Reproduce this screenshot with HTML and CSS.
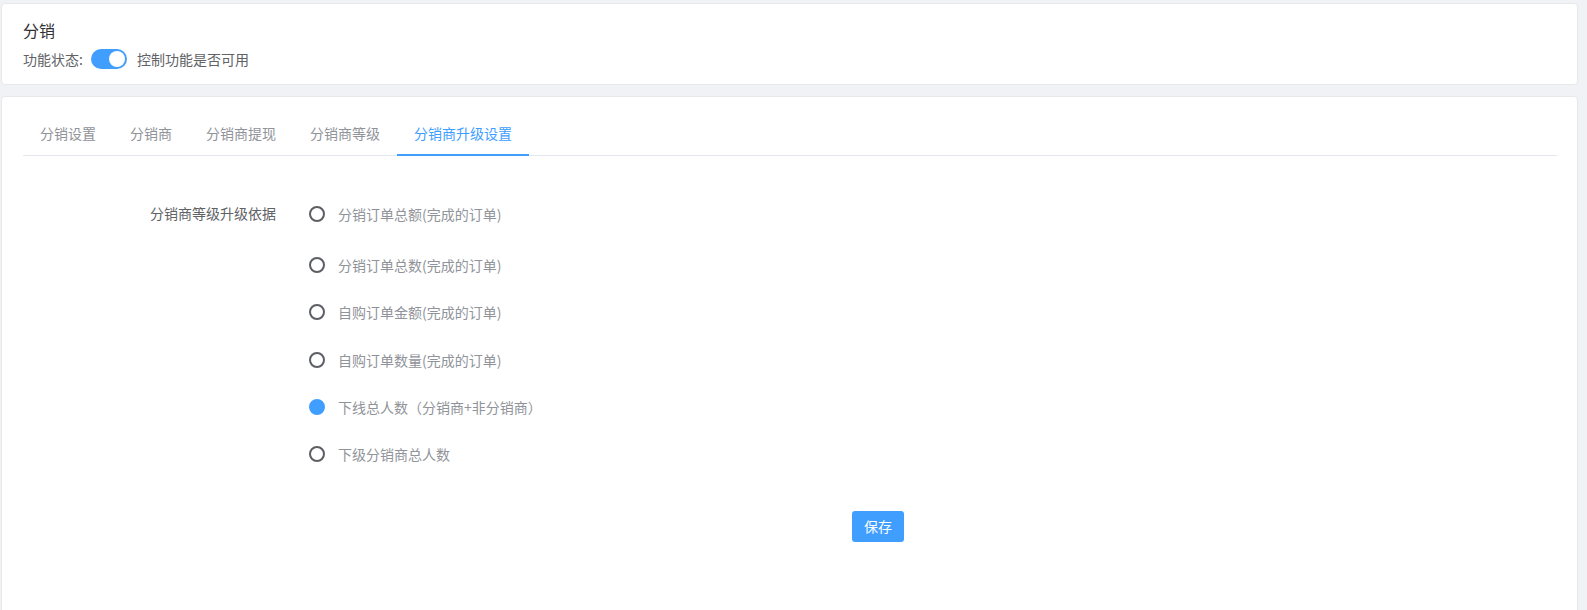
FILE: index.html
```html
<!DOCTYPE html>
<html lang="zh-CN">
  <head>
    <meta charset="UTF-8" />
    <meta name="viewport" content="width=device-width, initial-scale=1.0" />
    <title>分销</title>
    <link rel="stylesheet" href="styles.css">
  </head>
  <body>
    <div class="page">
      <!-- 功能开关 -->
      <section class="card card-head">
        <h2 class="card-title">分销</h2>
        <div class="status-row">
          <span class="status-label">功能状态:</span>
          <span class="switch is-on"><span class="switch-knob"></span></span>
          <span class="status-tip">控制功能是否可用</span>
        </div>
      </section>

      <section class="card card-main">
        <nav class="tabs">
          <a class="tab-item">分销设置</a>
          <a class="tab-item">分销商</a>
          <a class="tab-item">分销商提现</a>
          <a class="tab-item">分销商等级</a>
          <a class="tab-item is-active">分销商升级设置</a>
        </nav>

        <form class="upgrade-form">
          <div class="form-item">
            <label class="form-label">分销商等级升级依据</label>
            <div class="radio-group">
              <label class="radio"><span class="radio-dot"></span><span class="radio-text">分销订单总额(完成的订单)</span></label>
              <label class="radio"><span class="radio-dot"></span><span class="radio-text">分销订单总数(完成的订单)</span></label>
              <label class="radio"><span class="radio-dot"></span><span class="radio-text">自购订单金额(完成的订单)</span></label>
              <label class="radio"><span class="radio-dot"></span><span class="radio-text">自购订单数量(完成的订单)</span></label>
              <label class="radio is-checked"><span class="radio-dot"></span><span class="radio-text">下线总人数（分销商+非分销商）</span></label>
              <label class="radio"><span class="radio-dot"></span><span class="radio-text">下级分销商总人数</span></label>
            </div>
          </div>

          <div class="form-actions">
            <button type="button" class="btn-primary">保存</button>
          </div>
        </form>
      </section>
    </div>
  </body>
</html>
```

FILE: styles.css
```css
:root {
  --primary: #409eff;
  --page-bg: #f0f2f5;
  --border: #e4e7ed;
  --text-main: #303133;
  --text-regular: #606266;
  --text-muted: #909399;
}

html,
body {
  margin: 0;
  height: 100%;
  overflow: hidden;
}

body {
  background-color: var(--page-bg);
  font-family: "Noto Sans CJK SC", "Microsoft YaHei", sans-serif;
  font-size: 14px;
  color: var(--text-regular);
}

.page {
  padding: 3px 9px 0 1px;
  display: flex;
  flex-direction: column;
  gap: 11px;
  /* the lower card runs on past the bottom of the window */
  height: calc(100% + 20px);
  box-sizing: border-box;
}

.card {
  background: #fff;
  border: 1px solid #e6e8ec;
  border-radius: 4px;
}

.card-head {
  padding: 14px 21px 14px;
}

.card-title {
  margin: 0;
  font-size: 16px;
  font-weight: normal;
  line-height: 24px;
  color: var(--text-main);
}

.status-row {
  display: flex;
  align-items: center;
  height: 22px;
  margin-top: 6px;
  line-height: 22px;
}

.switch {
  position: relative;
  display: inline-block;
  width: 36px;
  height: 20px;
  margin-left: 8px;
  border-radius: 10px;
  background: #dcdfe6;
}

.switch.is-on {
  background: var(--primary);
}

.switch-knob {
  position: absolute;
  top: 2px;
  left: 2px;
  width: 16px;
  height: 16px;
  border-radius: 50%;
  background: #fff;
}

.switch.is-on .switch-knob {
  left: 18px;
}

.status-tip {
  margin-left: 10px;
}

.card-main {
  flex: 1;
  padding: 18px 20px 0 21px;
}

.tabs {
  display: flex;
  border-bottom: 1px solid var(--border);
}

.tab-item {
  height: 41px;
  line-height: 37px;
  padding: 0 17px;
  margin-bottom: -1px;
  box-sizing: border-box;
  color: var(--text-muted);
  cursor: pointer;
}

.tab-item.is-active {
  color: var(--primary);
  box-shadow: inset 0 -2px 0 var(--primary);
}

.upgrade-form {
  padding-top: 34px;
}

.form-item {
  display: flex;
  align-items: flex-start;
}

.form-label {
  width: 253px;
  padding-right: 12px;
  text-align: right;
  line-height: 47px;
  color: var(--text-regular);
}

.radio-group {
  display: flex;
  flex-direction: column;
  margin-left: 21px;
}

.radio {
  display: flex;
  align-items: center;
  height: 47.3px;
  cursor: pointer;
}

.radio:first-child {
  margin-bottom: 4px;
}

.radio-dot {
  width: 16px;
  height: 16px;
  box-sizing: border-box;
  border: 2px solid #5c5e63;
  border-radius: 50%;
  background: #fff;
}

.radio.is-checked .radio-dot {
  border-color: var(--primary);
  background: var(--primary);
}

.radio-text {
  margin-left: 13px;
  color: var(--text-muted);
}

.form-actions {
  padding: 33px 0 0 829px;
}

.btn-primary {
  height: 31px;
  padding: 0 12px;
  border: 0;
  border-radius: 3px;
  background: var(--primary);
  color: #fff;
  font-family: inherit;
  font-size: 14px;
  cursor: pointer;
}
```
